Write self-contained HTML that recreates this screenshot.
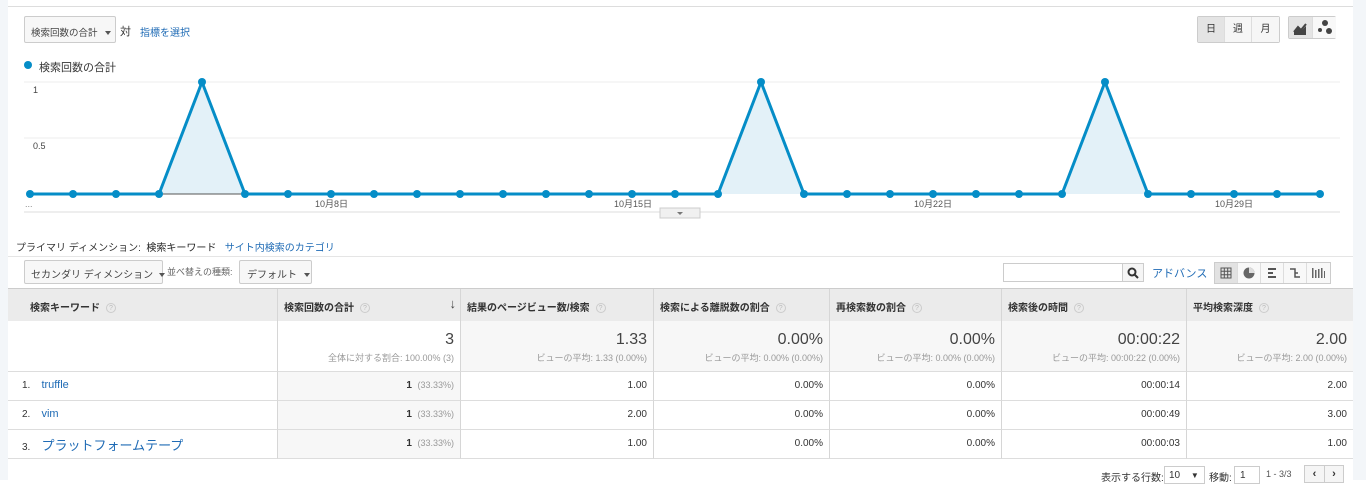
<!DOCTYPE html>
<html><head><meta charset="utf-8"><style>
*{box-sizing:border-box;margin:0;padding:0}
body{width:1366px;height:480px;overflow:hidden;background:#fff;font-family:"Liberation Sans","Noto Sans CJK JP",sans-serif;color:#333;position:relative;font-size:11px;white-space:nowrap}
.a{position:absolute}
.lstrip{left:0;top:0;width:8px;height:480px;background:#f3f6f9}
.rstrip{left:1353px;top:0;width:13px;height:480px;background:#f3f6f9}
.topline{left:8px;top:6px;width:1345px;height:1px;background:#ddd}
.btn{border:1px solid #ccc;border-radius:2px;background:#f5f5f5;font-size:10px;color:#444}
.link{color:#1f6bb5}
.caret{display:inline-block;width:0;height:0;border-left:3px solid transparent;border-right:3px solid transparent;border-top:4px solid #555;vertical-align:middle}
.th{background:#ebebeb;border-right:1px solid #d6d6d6;height:32px;font-size:10px;font-weight:bold;color:#333;padding:10px 0 0 20px}
.q{display:inline-block;width:10px;height:10px;border:1px solid #ccc;border-radius:50%;font-size:7px;color:#bbb;text-align:center;line-height:9px;margin-left:6px;font-weight:normal;vertical-align:middle}
.cell{border-right:1px solid #d6d6d6;border-bottom:1px solid #ddd;text-align:right;padding-right:6px;font-size:11px;color:#333}
.big{font-size:16px;color:#444;padding-top:10px}
.sm{font-size:9px;color:#999;margin-top:2px}
</style></head><body>
<div class="a lstrip"></div><div class="a rstrip"></div><div class="a topline"></div>

<div class="a btn" style="left:24px;top:16px;width:92px;height:27px;padding:8px 0 0 6px;background:#f7f7f7;font-size:9.5px">検索回数の合計 <span class="caret" style="margin-left:5px"></span></div>
<div class="a" style="left:120px;top:23px;font-size:11px">対</div>
<div class="a link" style="left:140px;top:24px;font-size:10px">指標を選択</div>

<div class="a" style="left:1197px;top:16px;width:83px;height:27px;border:1px solid #ccc;border-radius:2px;display:flex;font-size:10px">
<div style="width:27px;background:#e4e4e4;text-align:center;line-height:25px;border-right:1px solid #ddd">日</div>
<div style="width:27px;background:#f6f6f6;text-align:center;line-height:25px;border-right:1px solid #ddd">週</div>
<div style="flex:1;background:#f6f6f6;text-align:center;line-height:25px">月</div></div>
<div class="a" style="left:1288px;top:16px;width:48px;height:23px;border:1px solid #ccc;border-radius:2px;display:flex">
<div style="width:24px;background:#e4e4e4;border-right:1px solid #ddd"><svg width="23" height="21"><path d="M5 15 L9 10 L12 13 L17 7 M5 17 L17 17" stroke="#444" stroke-width="2" fill="none"/><path d="M5 15 L9 11 L12 14 L17 9 L17 16 L5 16Z" fill="#444"/></svg></div>
<div style="flex:1;background:#f8f8f8"><svg width="23" height="21"><circle cx="12" cy="6" r="3" fill="#444"/><circle cx="7" cy="13" r="2" fill="#444"/><circle cx="16" cy="14" r="3" fill="#444"/></svg></div></div>

<div class="a" style="left:24px;top:61px;width:8px;height:8px;border-radius:50%;background:#058dc7"></div>
<div class="a" style="left:39px;top:59px;font-size:11px">検索回数の合計</div>

<svg class="a" style="left:0;top:0" width="1366" height="230">
<line x1="24" y1="82" x2="1340" y2="82" stroke="#eee"/>
<line x1="24" y1="138" x2="1340" y2="138" stroke="#eee"/>
<line x1="24" y1="212" x2="1340" y2="212" stroke="#ddd"/>
<text x="33" y="93" font-size="9" fill="#444" font-family="Liberation Sans">1</text>
<text x="33" y="149" font-size="9" fill="#444" font-family="Liberation Sans">0.5</text>
<text x="25" y="207" font-size="9" fill="#888" font-family="Liberation Sans">...</text>
<g font-size="9" fill="#555" font-family="Liberation Sans,Noto Sans CJK JP">
<text x="315" y="207">10月8日</text><text x="614" y="207">10月15日</text><text x="914" y="207">10月22日</text><text x="1215" y="207">10月29日</text></g>
<g fill="#e3f1f8"><path d="M159 194L202 82L245 194Z"/><path d="M718 194L761 82L804 194Z"/><path d="M1062 194L1105 82L1148 194Z"/></g>
<line x1="159" y1="194" x2="245" y2="194" stroke="#555"/>
<polyline fill="none" stroke="#058dc7" stroke-width="3" points="30,194 73,194 116,194 159,194 202,82 245,194 288,194 331,194 374,194 417,194 460,194 503,194 546,194 589,194 632,194 675,194 718,194 761,82 804,194 847,194 890,194 933,194 976,194 1019,194 1062,194 1105,82 1148,194 1191,194 1234,194 1277,194 1320,194"/>
<g fill="#058dc7">
<circle cx="30" cy="194" r="4"/><circle cx="73" cy="194" r="4"/><circle cx="116" cy="194" r="4"/><circle cx="159" cy="194" r="4"/><circle cx="202" cy="82" r="4"/><circle cx="245" cy="194" r="4"/><circle cx="288" cy="194" r="4"/><circle cx="331" cy="194" r="4"/><circle cx="374" cy="194" r="4"/><circle cx="417" cy="194" r="4"/><circle cx="460" cy="194" r="4"/><circle cx="503" cy="194" r="4"/><circle cx="546" cy="194" r="4"/><circle cx="589" cy="194" r="4"/><circle cx="632" cy="194" r="4"/><circle cx="675" cy="194" r="4"/><circle cx="718" cy="194" r="4"/><circle cx="761" cy="82" r="4"/><circle cx="804" cy="194" r="4"/><circle cx="847" cy="194" r="4"/><circle cx="890" cy="194" r="4"/><circle cx="933" cy="194" r="4"/><circle cx="976" cy="194" r="4"/><circle cx="1019" cy="194" r="4"/><circle cx="1062" cy="194" r="4"/><circle cx="1105" cy="82" r="4"/><circle cx="1148" cy="194" r="4"/><circle cx="1191" cy="194" r="4"/><circle cx="1234" cy="194" r="4"/><circle cx="1277" cy="194" r="4"/><circle cx="1320" cy="194" r="4"/></g>
<rect x="660" y="208" width="40" height="10" fill="#f0f0f0" stroke="#ccc"/>
<path d="M677 212L683 212L680 215Z" fill="#777"/>
</svg>

<div class="a" style="left:16px;top:239px;font-size:10px;color:#333">プライマリ ディメンション: &nbsp;<span style="color:#222">検索キーワード</span> &nbsp;&nbsp;<span class="link">サイト内検索のカテゴリ</span></div>
<div class="a" style="left:8px;top:256px;width:1345px;height:1px;background:#e5e5e5"></div>
<div class="a btn" style="left:24px;top:260px;width:139px;height:24px;padding:5px 0 0 6px;background:#f7f7f7;font-size:10px">セカンダリ ディメンション <span class="caret" style="margin-left:3px"></span></div>
<div class="a" style="left:167px;top:265px;font-size:9px;color:#666">並べ替えの種類:</div>
<div class="a btn" style="left:239px;top:260px;width:73px;height:24px;padding:5px 0 0 7px;background:#f7f7f7">デフォルト <span class="caret" style="margin-left:4px"></span></div>

<div class="a" style="left:1003px;top:263px;width:141px;height:19px;border:1px solid #ccc;background:#fff"></div>
<div class="a" style="left:1122px;top:263px;width:22px;height:19px;border:1px solid #ccc;background:#f5f5f5"><svg width="20" height="17"><circle cx="9" cy="8" r="3.5" stroke="#333" stroke-width="2" fill="none"/><line x1="11.5" y1="10.5" x2="15" y2="14" stroke="#333" stroke-width="2"/></svg></div>
<div class="a link" style="left:1152px;top:265px;font-size:11px">アドバンス</div>
<div class="a" style="left:1214px;top:262px;width:117px;height:22px;border:1px solid #ccc;display:flex;background:#f8f8f8">
<div style="width:23px;background:#e2e2e2;border-right:1px solid #ddd"><svg width="22" height="20"><g stroke="#555" fill="none"><rect x="6" y="5" width="10" height="10"/><path d="M9.3 5V15M12.7 5V15M6 8.3H16M6 11.7H16"/></g></svg></div>
<div style="width:23px;border-right:1px solid #ddd"><svg width="22" height="20"><circle cx="11" cy="10" r="5.5" fill="#666"/><path d="M11 10V4.5A5.5 5.5 0 0 1 16.5 10Z" fill="#ddd"/></svg></div>
<div style="width:23px;border-right:1px solid #ddd"><svg width="22" height="20"><g fill="#555"><rect x="7" y="5" width="8" height="2"/><rect x="7" y="9" width="5" height="2"/><rect x="7" y="13" width="8" height="2"/></g></svg></div>
<div style="width:23px;border-right:1px solid #ddd"><svg width="22" height="20"><g stroke="#555" stroke-width="1.5" fill="none"><path d="M6 6H11V14H16M11 10H14"/></g></svg></div>
<div style="flex:1"><svg width="22" height="20"><g fill="#666"><rect x="5" y="5" width="1.5" height="10"/><rect x="8" y="7" width="1.5" height="8"/><rect x="11" y="6" width="1.5" height="9"/><rect x="14" y="5" width="1.5" height="10"/><rect x="17" y="8" width="1" height="7"/></g></svg></div></div>

<!-- table -->
<div class="a" style="left:8px;top:288px;width:1345px;height:1px;background:#ccc"></div>
<div class="a th" style="left:8px;top:289px;width:270px;padding-left:22px">検索キーワード<span class="q">?</span></div>
<div class="a th" style="left:278px;top:289px;width:183px;padding-left:6px">検索回数の合計<span class="q">?</span><span style="position:absolute;right:4px;top:7px;font-size:13px;font-weight:normal;color:#444">↓</span></div>
<div class="a th" style="left:461px;top:289px;width:193px;padding-left:6px">結果のページビュー数/検索<span class="q">?</span></div>
<div class="a th" style="left:654px;top:289px;width:176px;padding-left:6px">検索による離脱数の割合<span class="q">?</span></div>
<div class="a th" style="left:830px;top:289px;width:172px;padding-left:6px">再検索数の割合<span class="q">?</span></div>
<div class="a th" style="left:1002px;top:289px;width:185px;padding-left:6px">検索後の時間<span class="q">?</span></div>
<div class="a th" style="left:1187px;top:289px;width:166px;padding-left:6px;border-right:none">平均検索深度<span class="q">?</span></div>

<div class="a cell" style="left:8px;top:321px;width:270px;height:51px;background:#fff"></div>
<div class="a cell" style="left:278px;top:321px;width:183px;height:51px;background:#fff"><div class="big">3</div><div class="sm">全体に対する割合: 100.00% (3)</div></div>
<div class="a cell" style="left:461px;top:321px;width:193px;height:51px;background:#f7f7f7"><div class="big">1.33</div><div class="sm">ビューの平均: 1.33 (0.00%)</div></div>
<div class="a cell" style="left:654px;top:321px;width:176px;height:51px;background:#f7f7f7"><div class="big">0.00%</div><div class="sm">ビューの平均: 0.00% (0.00%)</div></div>
<div class="a cell" style="left:830px;top:321px;width:172px;height:51px;background:#f7f7f7"><div class="big">0.00%</div><div class="sm">ビューの平均: 0.00% (0.00%)</div></div>
<div class="a cell" style="left:1002px;top:321px;width:185px;height:51px;background:#f7f7f7"><div class="big">00:00:22</div><div class="sm">ビューの平均: 00:00:22 (0.00%)</div></div>
<div class="a cell" style="left:1187px;top:321px;width:166px;height:51px;background:#f7f7f7;border-right:none"><div class="big">2.00</div><div class="sm">ビューの平均: 2.00 (0.00%)</div></div>

<!-- rows -->
<div class="a cell" style="left:8px;top:372px;width:270px;height:29px;text-align:left;padding:7px 0 0 14px;font-size:10px">1. &nbsp;&nbsp;&nbsp;<span class="link" style="font-size:11px">truffle</span></div>
<div class="a cell" style="left:278px;top:372px;width:183px;height:29px;background:#f7f7f7;padding-top:8px;font-size:10px"><b>1</b> &nbsp;<span style="color:#999;font-size:9px">(33.33%)</span></div>
<div class="a cell" style="left:461px;top:372px;width:193px;height:29px;padding-top:8px;font-size:10px">1.00</div>
<div class="a cell" style="left:654px;top:372px;width:176px;height:29px;padding-top:8px;font-size:10px">0.00%</div>
<div class="a cell" style="left:830px;top:372px;width:172px;height:29px;padding-top:8px;font-size:10px">0.00%</div>
<div class="a cell" style="left:1002px;top:372px;width:185px;height:29px;padding-top:8px;font-size:10px">00:00:14</div>
<div class="a cell" style="left:1187px;top:372px;width:166px;height:29px;padding-top:8px;font-size:10px;border-right:none">2.00</div>

<div class="a cell" style="left:8px;top:401px;width:270px;height:29px;text-align:left;padding:7px 0 0 14px;font-size:10px">2. &nbsp;&nbsp;&nbsp;<span class="link" style="font-size:11px">vim</span></div>
<div class="a cell" style="left:278px;top:401px;width:183px;height:29px;background:#f7f7f7;padding-top:8px;font-size:10px"><b>1</b> &nbsp;<span style="color:#999;font-size:9px">(33.33%)</span></div>
<div class="a cell" style="left:461px;top:401px;width:193px;height:29px;padding-top:8px;font-size:10px">2.00</div>
<div class="a cell" style="left:654px;top:401px;width:176px;height:29px;padding-top:8px;font-size:10px">0.00%</div>
<div class="a cell" style="left:830px;top:401px;width:172px;height:29px;padding-top:8px;font-size:10px">0.00%</div>
<div class="a cell" style="left:1002px;top:401px;width:185px;height:29px;padding-top:8px;font-size:10px">00:00:49</div>
<div class="a cell" style="left:1187px;top:401px;width:166px;height:29px;padding-top:8px;font-size:10px;border-right:none">3.00</div>

<div class="a cell" style="left:8px;top:430px;width:270px;height:29px;text-align:left;padding:5px 0 0 14px;font-size:10px">3. &nbsp;&nbsp;&nbsp;<span class="link" style="font-size:13px">プラットフォームテープ</span></div>
<div class="a cell" style="left:278px;top:430px;width:183px;height:29px;background:#f7f7f7;padding-top:8px;font-size:10px"><b>1</b> &nbsp;<span style="color:#999;font-size:9px">(33.33%)</span></div>
<div class="a cell" style="left:461px;top:430px;width:193px;height:29px;padding-top:8px;font-size:10px">1.00</div>
<div class="a cell" style="left:654px;top:430px;width:176px;height:29px;padding-top:8px;font-size:10px">0.00%</div>
<div class="a cell" style="left:830px;top:430px;width:172px;height:29px;padding-top:8px;font-size:10px">0.00%</div>
<div class="a cell" style="left:1002px;top:430px;width:185px;height:29px;padding-top:8px;font-size:10px">00:00:03</div>
<div class="a cell" style="left:1187px;top:430px;width:166px;height:29px;padding-top:8px;font-size:10px;border-right:none">1.00</div>

<!-- pager -->
<div class="a" style="left:1101px;top:469px;font-size:10px">表示する行数:</div>
<div class="a" style="left:1164px;top:466px;width:41px;height:18px;border:1px solid #ccc;font-size:10px;padding:3px 0 0 4px">10 <span style="margin-left:8px;font-size:8px">▼</span></div>
<div class="a" style="left:1209px;top:469px;font-size:10px">移動:</div>
<div class="a" style="left:1234px;top:466px;width:26px;height:18px;border:1px solid #ccc;font-size:10px;padding:3px 0 0 5px">1</div>
<div class="a" style="left:1266px;top:469px;font-size:9px;color:#555">1 - 3/3</div>
<div class="a" style="left:1304px;top:465px;width:40px;height:18px;border:1px solid #ccc;background:#f5f5f5;display:flex;font-size:11px;font-weight:bold">
<div style="width:20px;text-align:center;border-right:1px solid #ccc;line-height:16px">‹</div><div style="flex:1;text-align:center;line-height:16px">›</div></div>
</body></html>
